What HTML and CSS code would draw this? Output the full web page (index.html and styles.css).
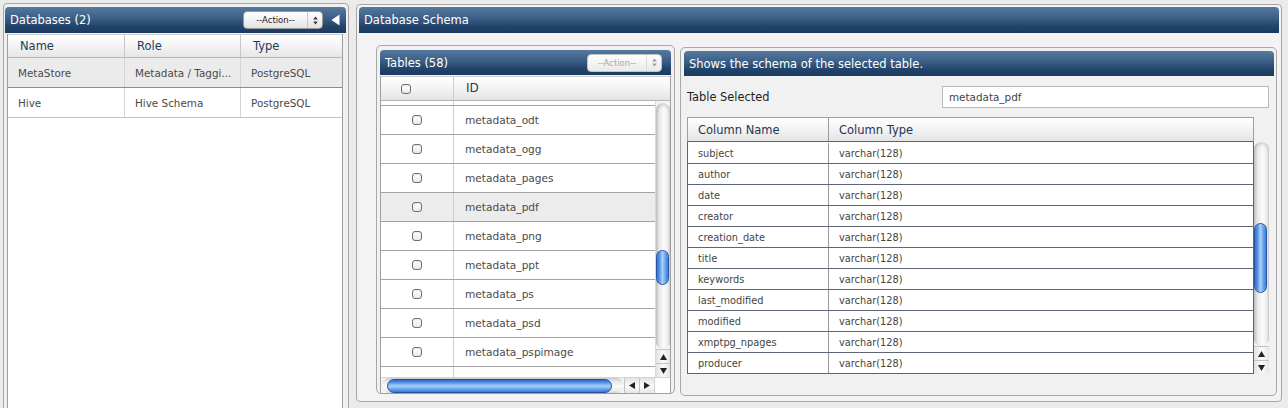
FILE: index.html
```html
<!DOCTYPE html>
<html>
<head>
<meta charset="utf-8">
<title>Database Schema</title>
<link rel="stylesheet" href="styles.css">
</head>
<body>
<div class="app">
  <section class="panel dbpanel">
    <div class="phead">
      <span class="ptitle">Databases (2)</span>
      <div class="hright">
        <div class="select">
          <span class="sel-text">--Action--</span>
          <span class="sel-arrow"><svg width="5" height="9" viewBox="0 0 5 9"><path d="M2.5 0.5 L4.8 3.6 L0.2 3.6 Z M2.5 8.5 L4.8 5.4 L0.2 5.4 Z" fill="#333"/></svg></span>
        </div>
        <svg class="collapse" width="9" height="12" viewBox="0 0 9 12"><path d="M8.5 0.5 L8.5 11.5 L0.5 6 Z" fill="#fff"/></svg>
      </div>
    </div>
    <div class="dbtable">
      <div class="dbrow dbhead"><div class="c">Name</div><div class="c">Role</div><div class="c">Type</div></div>
      <div class="dbrow dbsel"><div class="c">MetaStore</div><div class="c">Metadata / Taggi...</div><div class="c">PostgreSQL</div></div>
      <div class="dbrow"><div class="c">Hive</div><div class="c">Hive Schema</div><div class="c">PostgreSQL</div></div>
    </div>
  </section>

  <section class="panel schema">
    <div class="phead"><span class="ptitle">Database Schema</span></div>
    <div class="sbody">
      <div class="sub tables">
        <div class="phead small">
          <span class="ptitle">Tables (58)</span>
          <div class="select disabled">
            <span class="sel-text">--Action--</span>
            <span class="sel-arrow"><svg width="5" height="9" viewBox="0 0 5 9"><path d="M2.5 0.5 L4.8 3.6 L0.2 3.6 Z M2.5 8.5 L4.8 5.4 L0.2 5.4 Z" fill="#999"/></svg></span>
          </div>
        </div>
        <div class="tbox">
          <div class="trow thead">
            <div class="tc chk head-chk"><span class="cbox"></span></div>
            <div class="tc id">ID</div>
          </div>
          <div class="tmid">
            <div class="trows">
              <div class="trow partial"><div class="tc chk"></div><div class="tc id"></div></div>
              <div class="trow"><div class="tc chk"><span class="cbox"></span></div><div class="tc id">metadata_odt</div></div>
              <div class="trow"><div class="tc chk"><span class="cbox"></span></div><div class="tc id">metadata_ogg</div></div>
              <div class="trow"><div class="tc chk"><span class="cbox"></span></div><div class="tc id">metadata_pages</div></div>
              <div class="trow tsel"><div class="tc chk"><span class="cbox"></span></div><div class="tc id">metadata_pdf</div></div>
              <div class="trow"><div class="tc chk"><span class="cbox"></span></div><div class="tc id">metadata_png</div></div>
              <div class="trow"><div class="tc chk"><span class="cbox"></span></div><div class="tc id">metadata_ppt</div></div>
              <div class="trow"><div class="tc chk"><span class="cbox"></span></div><div class="tc id">metadata_ps</div></div>
              <div class="trow"><div class="tc chk"><span class="cbox"></span></div><div class="tc id">metadata_psd</div></div>
              <div class="trow"><div class="tc chk"><span class="cbox"></span></div><div class="tc id">metadata_pspimage</div></div>
              <div class="trow"><div class="tc chk"></div><div class="tc id"></div></div>
            </div>
            <div class="vscroll">
              <div class="vtrack"><div class="vthumb thumb-tables"></div></div>
              <div class="vbtn"><svg width="7" height="6" viewBox="0 0 7 6"><path d="M3.5 0 L7 6 L0 6 Z" fill="#222"/></svg></div>
              <div class="vbtn"><svg width="7" height="6" viewBox="0 0 7 6"><path d="M3.5 6 L7 0 L0 0 Z" fill="#222"/></svg></div>
            </div>
          </div>
          <div class="hscroll">
            <div class="htrack"><div class="hthumb"></div></div>
            <div class="hbtn"><svg width="6" height="7" viewBox="0 0 6 7"><path d="M0 3.5 L6 0 L6 7 Z" fill="#222"/></svg></div>
            <div class="hbtn"><svg width="6" height="7" viewBox="0 0 6 7"><path d="M6 3.5 L0 0 L0 7 Z" fill="#222"/></svg></div>
            <div class="corner"></div>
          </div>
        </div>
      </div>

      <div class="sub detail">
        <div class="phead small">
          <span class="ptitle">Shows the schema of the selected table.</span>
        </div>
        <div class="selrow">
          <span class="sellabel">Table Selected</span>
          <div class="input">metadata_pdf</div>
        </div>
        <div class="rtable">
          <div class="rhead"><div class="rc r1">Column Name</div><div class="rc r2">Column Type</div></div>
          <div class="rbodywrap">
            <div class="rrows">
              <div class="rrow"><div class="rc r1">subject</div><div class="rc r2">varchar(128)</div></div>
              <div class="rrow"><div class="rc r1">author</div><div class="rc r2">varchar(128)</div></div>
              <div class="rrow"><div class="rc r1">date</div><div class="rc r2">varchar(128)</div></div>
              <div class="rrow"><div class="rc r1">creator</div><div class="rc r2">varchar(128)</div></div>
              <div class="rrow"><div class="rc r1">creation_date</div><div class="rc r2">varchar(128)</div></div>
              <div class="rrow"><div class="rc r1">title</div><div class="rc r2">varchar(128)</div></div>
              <div class="rrow"><div class="rc r1">keywords</div><div class="rc r2">varchar(128)</div></div>
              <div class="rrow"><div class="rc r1">last_modified</div><div class="rc r2">varchar(128)</div></div>
              <div class="rrow"><div class="rc r1">modified</div><div class="rc r2">varchar(128)</div></div>
              <div class="rrow"><div class="rc r1">xmptpg_npages</div><div class="rc r2">varchar(128)</div></div>
              <div class="rrow"><div class="rc r1">producer</div><div class="rc r2">varchar(128)</div></div>
            </div>
            <div class="vscroll rscroll">
              <div class="vtrack"><div class="vthumb thumb-detail"></div></div>
              <div class="vbtn"><svg width="7" height="6" viewBox="0 0 7 6"><path d="M3.5 0 L7 6 L0 6 Z" fill="#222"/></svg></div>
              <div class="vbtn"><svg width="7" height="6" viewBox="0 0 7 6"><path d="M3.5 6 L7 0 L0 0 Z" fill="#222"/></svg></div>
            </div>
          </div>
        </div>
      </div>
    </div>
  </section>
</div>
</body>
</html>
```

FILE: styles.css
```css
* { box-sizing: border-box; }
html, body { margin: 0; padding: 0; }
body {
  background: #ebebeb;
  font-family: "DejaVu Sans", "Liberation Sans", sans-serif;
  width: 1288px;
  height: 408px;
  overflow: hidden;
}
.app {
  display: flex;
  align-items: flex-start;
  padding: 3px 0 0 3px;
  gap: 7px;
}
.panel {
  border: 1px solid #a6a6a6;
  border-radius: 4px;
  background: #f0f0f0;
}
.phead {
  height: 26px;
  border-radius: 4px 4px 0 0;
  background: linear-gradient(#56799f 0%, #3a5d85 45%, #22436a 75%, #1b3a60 100%);
  display: flex;
  align-items: center;
  justify-content: space-between;
  padding: 0 6px 0 5px;
  color: #fff;
}
.ptitle {
  font-size: 11.5px;
  white-space: nowrap;
}
/* Left panel */
.dbpanel {
  width: 346px;
  height: 410px;
  padding: 3px 2px 0 1px;
}
.hright { display: flex; align-items: center; gap: 8px; }
.select {
  height: 18px;
  border: 1px solid #9a9a9a;
  border-radius: 4px;
  background: linear-gradient(#ffffff, #f2f2f2 50%, #e2e2e2);
  display: flex;
  align-items: stretch;
  color: #222;
  font-size: 8.5px;
}
.dbpanel .select { width: 80px; margin-left: 1px; }
.sel-text {
  flex: 1;
  display: flex;
  align-items: center;
  justify-content: center;
  border-right: 1px solid #c8c8c8;
}
.sel-arrow {
  width: 14px;
  display: flex;
  align-items: center;
  justify-content: center;
}
.collapse { display: block; margin-top: -1px; }
.dbtable {
  margin: 1px 3px 0 2px;
  background: #fff;
  border-left: 1px solid #9d9d9d;
  border-right: 1px solid #9d9d9d;
  height: 400px;
}
.dbrow {
  display: grid;
  grid-template-columns: 117px 116px 1fr;
  height: 30px;
  border-bottom: 1px solid #c4c4c4;
  color: #4a4a4a;
  font-size: 10.4px;
}
.dbrow .c {
  display: flex;
  align-items: center;
  padding-left: 10px;
  border-right: 1px solid #d4d4d4;
}
.dbrow .c:last-child { border-right: 0; }
.dbhead {
  height: 24px;
  background: linear-gradient(#ffffff, #f4f4f4 50%, #e6e6e6);
  border-top: 1px solid #d0d0d0;
  border-bottom: 1px solid #b8b8b8;
  color: #223a58;
  font-size: 11.5px;
}
.dbhead .c { padding-left: 12px; border-right-color: #c8c8c8; }
.dbsel {
  background: #ebebeb;
  border-bottom: 1px solid #8c8c8c;
}

/* Schema panel */
.schema {
  width: 926px;
  height: 398px;
  margin-top: 1px;
  padding: 2px 2px 0 2px;
  background: #f3f3f3;
}
.sbody {
  display: flex;
  align-items: flex-start;
  gap: 5px;
  padding: 12px 0 0 17px;
}
.sub {
  border: 1px solid #a8a8a8;
  border-radius: 5px;
  background: #f1f1f1;
}
.phead.small { height: 25px; padding: 0 8px 0 5px; }
.tables {
  width: 299px;
  height: 349px;
  padding: 4px 3px 0 3px;
}
.tables .select {
  width: 75px;
  height: 18px;
  color: #a8a8a8;
  border-color: #c4c4c4;
  background: linear-gradient(#ffffff, #f4f4f4 50%, #eaeaea);
  margin-right: 1px;
}
.tables .sel-text { border-right-color: #dadada; }
.tbox {
  margin-top: 1px;
  border: 1px solid #9f9f9f;
  border-top: 0;
  background: #fff;
}
.trow {
  display: flex;
  height: 29px;
  border-bottom: 1px solid #a3a3a3;
  font-size: 10.6px;
  color: #4a4a4a;
}
.tc { display: flex; align-items: center; }
.tc.chk {
  width: 73px;
  border-right: 1px solid #cfcfcf;
  justify-content: center;
}
.tc.id { flex: 1; padding-left: 11px; padding-bottom: 1px; }
.thead {
  height: 25px;
  background: linear-gradient(#ffffff, #f3f3f3 50%, #e4e4e4);
  border-top: 1px solid #cfcfcf;
  border-bottom: 1px solid #b5b5b5;
  color: #223a58;
  font-size: 12px;
}
.thead .tc.id { padding-left: 12px; }
.head-chk { justify-content: flex-start !important; padding-left: 20px; }
.cbox {
  width: 10px;
  height: 10px;
  border: 1px solid #6e6e6e;
  border-radius: 3px;
  background: linear-gradient(#ffffff, #e9e9e9);
  box-shadow: inset 0 1px 1px rgba(0,0,0,0.08);
}
.tmid {
  display: flex;
  height: 276px;
  overflow: hidden;
}
.trows { flex: 1; overflow: hidden; }
.trow.partial { height: 5px; }
.tsel { background: #ececec; }

/* Aqua scrollbars */
.vscroll {
  width: 15px;
  display: flex;
  flex-direction: column;
  background: #f4f4f4;
  border-left: 1px solid #d8d8d8;
}
.vtrack {
  flex: 1;
  margin-top: 2px;
  border-radius: 7px;
  background: linear-gradient(to right, #c6c6c6 0%, #e9e9e9 25%, #fbfbfb 55%, #ededed 85%, #d2d2d2 100%);
  box-shadow: inset 0 3px 3px rgba(0,0,0,0.12);
}
.vthumb {
  width: 13px;
  border: 1px solid #2452a6;
  border-radius: 7px;
  background: linear-gradient(to right, #2f67c8 0%, #5d9ae8 25%, #a9d0f7 50%, #6aa5ec 75%, #3a77d2 100%);
  box-shadow: inset 0 0 1px rgba(255,255,255,0.6);
}
.thumb-tables { margin-top: 147px; height: 35px; }
.thumb-detail { margin-top: 81px; height: 70px; }
.vbtn {
  height: 14px;
  display: flex;
  align-items: center;
  justify-content: center;
  background: linear-gradient(to right, #e2e2e2, #fafafa 50%, #e6e6e6);
  border-top: 1px solid #c4c4c4;
}
.hscroll {
  display: flex;
  height: 16px;
  border-top: 1px solid #d4d4d4;
  background: #f4f4f4;
}
.htrack {
  width: 242px;
  margin-left: 1px;
  border-radius: 8px;
  background: linear-gradient(#c9c9c9 0%, #eaeaea 25%, #fbfbfb 55%, #ececec 85%, #d3d3d3 100%);
  padding-left: 5px;
  display: flex;
  align-items: center;
}
.hthumb {
  width: 225px;
  height: 14px;
  border: 1px solid #2452a6;
  border-radius: 7px;
  background: linear-gradient(#2f67c8 0%, #5d9ae8 25%, #a9d0f7 50%, #6aa5ec 75%, #3a77d2 100%);
}
.hbtn {
  width: 15px;
  display: flex;
  align-items: center;
  justify-content: center;
  background: linear-gradient(#e2e2e2, #fafafa 50%, #e6e6e6);
  border-left: 1px solid #c4c4c4;
}
.corner { flex: 1; background: #fff; border-left: 1px solid #d0d0d0; }

/* Detail panel */
.detail {
  width: 597px;
  height: 349px;
  margin-top: 2px;
  padding: 3px 2px 0 3px;
}
.selrow {
  display: flex;
  align-items: center;
  justify-content: space-between;
  margin-top: 10px;
  padding-left: 3px;
  padding-right: 5px;
  height: 22px;
}
.sellabel { font-size: 11.4px; color: #1f1f1f; }
.input {
  width: 327px;
  height: 22px;
  border: 1px solid #b9b9b9;
  background: #fff;
  font-size: 10.4px;
  color: #444;
  display: flex;
  align-items: center;
  padding-left: 6px;
}
.rtable {
  margin: 9px 0 0 3px;
  width: 582px;
}
.rhead {
  display: flex;
  width: 567px;
  height: 25px;
  border: 1px solid #9aa0ab;
  border-bottom: 1px solid #5c6477;
  background: linear-gradient(#ffffff, #f3f3f3 50%, #e4e4e4);
  color: #1f3555;
  font-size: 11.5px;
}
.rc { display: flex; align-items: center; }
.r1 { width: 141px; padding-left: 10px; border-right: 1px solid #9a9a9a; }
.r2 { flex: 1; padding-left: 10px; }
.rbodywrap { display: flex; }
.rrows {
  width: 567px;
  background: #fff;
  border-left: 1px solid #5c6477;
  border-right: 1px solid #5c6477;
  padding-top: 1px;
}
.rrow {
  display: flex;
  height: 21px;
  border-bottom: 1px solid #5c6477;
  font-size: 9.8px;
  color: #444;
}
.rscroll { width: 15px; border-left: 0; background: #f4f4f4; }
.rscroll .vtrack { margin-top: 0; }
```
